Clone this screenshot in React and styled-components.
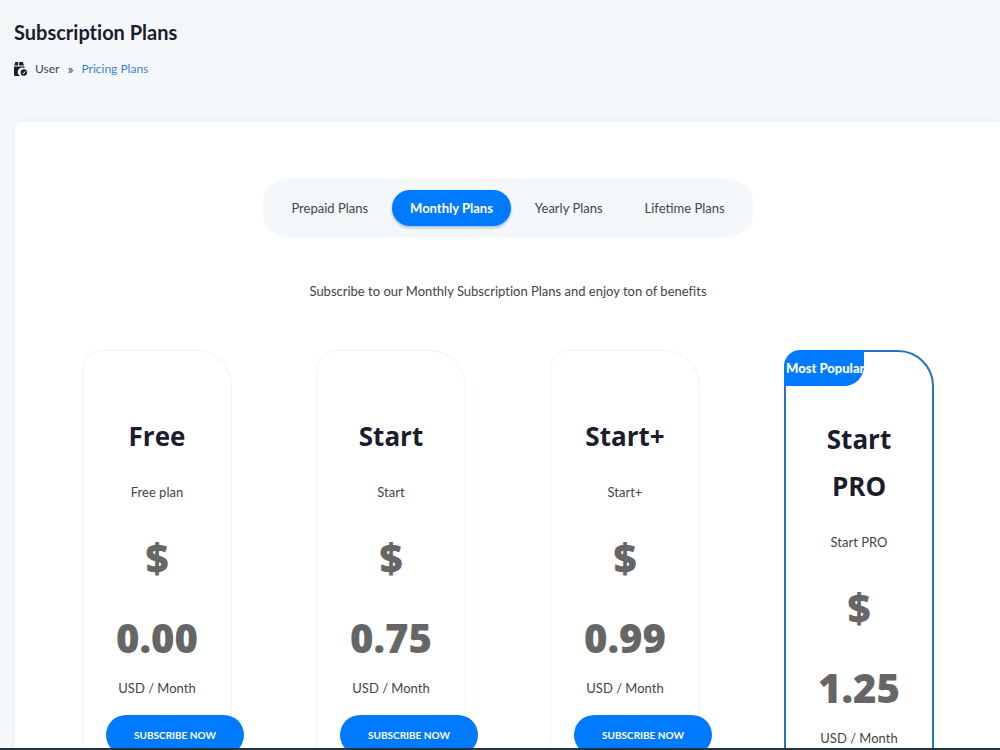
import styled, { createGlobalStyle } from "styled-components";

const GlobalStyle = createGlobalStyle`
  * {
    box-sizing: border-box;
  }

  body {
    margin: 0;
    background-color: #f4f8fb;
    color: #444;
    font-family: Lato, "Open Sans", sans-serif;
    font-size: 13px;
    font-variant-ligatures: none;
    line-height: 20px;
  }
`;

const tabs = ["Prepaid Plans", "Monthly Plans", "Yearly Plans", "Lifetime Plans"];

const plans = [
  { name: "Free", description: "Free plan", price: "0.00" },
  { name: "Start", description: "Start", price: "0.75" },
  { name: "Start+", description: "Start+", price: "0.99" },
  { name: "Start PRO", description: "Start PRO", price: "1.25", popular: true },
];

const BoxCheckIcon = () => (
  <svg width="13" height="15" viewBox="0 0 13 15" aria-hidden="true">
    <path d="M1.4 0H4.2V3.6H0.2ZM5.2 0H8.8L10 3.6H5.2Z" fill="#1b1c2d" />
    <path d="M0 4.5H10.4V6.2A4.3 4.3 0 0 0 6 14H1.2Q0 14 0 12.8Z" fill="#1b1c2d" />
    <circle cx="9.8" cy="10.5" r="3.2" fill="#1b1c2d" />
    <path d="M8.3 10.6L9.4 11.7L11.4 9.3" fill="none" stroke="#fff" strokeWidth="1" />
  </svg>
);

const App = () => {
  return (
    <Page>
      <GlobalStyle />
      <Header>
        <Title>Subscription Plans</Title>
        <Breadcrumb aria-label="Breadcrumb">
          <BoxCheckIcon />
          <span>User</span>
          <Separator>»</Separator>
          <BreadcrumbLink href="#pricing">Pricing Plans</BreadcrumbLink>
        </Breadcrumb>
      </Header>
      <Panel>
        <Tabs>
          {tabs.map((tab) => (
            <Tab key={tab} $active={tab === "Monthly Plans"}>
              {tab}
            </Tab>
          ))}
        </Tabs>
        <Intro>Subscribe to our Monthly Subscription Plans and enjoy ton of benefits</Intro>
        <Plans>
          {plans.map((plan) => (
            <Plan key={plan.name} $popular={plan.popular}>
              {plan.popular && <Badge>Most Popular</Badge>}
              <PlanName>{plan.name}</PlanName>
              <PlanText>{plan.description}</PlanText>
              <Price>
                $ <span>{plan.price}</span>
              </Price>
              <PlanText>USD / Month</PlanText>
              <SubscribeButton>SUBSCRIBE NOW</SubscribeButton>
            </Plan>
          ))}
        </Plans>
      </Panel>
    </Page>
  );
};

const Page = styled.div`
  height: 100vh;
  overflow: hidden;
  display: flex;
  flex-direction: column;
  border-bottom: 2px solid #26323b;
`;

const Header = styled.header`
  flex: none;
  padding: 18px 14px 42px;
`;

const Title = styled.h1`
  margin: 0 0 12px;
  color: #1b1c2d;
  font-size: 20px;
  line-height: 28px;
  font-weight: 700;
`;

const Breadcrumb = styled.nav`
  display: flex;
  align-items: center;
  gap: 8px;
  height: 22px;
  font-size: 12px;
`;

const Separator = styled.span`
  font-size: 14px;
`;

const BreadcrumbLink = styled.a`
  color: #3d7fd6;
  text-decoration: none;
`;

const Panel = styled.main`
  flex: none;
  margin-left: 15px;
  padding: 57px 24px 40px 25px;
  background-color: #fff;
  border-radius: 8px 0 0 0;
  box-shadow: 0 0 6px rgba(40, 70, 100, 0.06);
`;

const Tabs = styled.div`
  display: flex;
  gap: 6px;
  width: fit-content;
  margin: 0 auto;
  padding: 11px 10px;
  border-radius: 24px;
  background-color: #f4f8fb;
`;

const Tab = styled.button`
  height: 36px;
  padding: 0 18px;
  border: 0;
  border-radius: 18px;
  background-color: ${(props) => (props.$active ? "#007bff" : "transparent")};
  box-shadow: ${(props) => (props.$active ? "0 2px 3px rgba(0, 60, 130, 0.3)" : "none")};
  color: ${(props) => (props.$active ? "#fff" : "#444")};
  font-family: inherit;
  font-size: 13px;
  font-weight: ${(props) => (props.$active ? 700 : 400)};
  cursor: pointer;
`;

const Intro = styled.p`
  margin: 44px 0 49px;
  text-align: center;
`;

const Plans = styled.section`
  display: grid;
  grid-template-columns: repeat(4, minmax(0, 1fr));
  align-items: start;
`;

const Plan = styled.article`
  position: relative;
  margin: 0 42px;
  padding: ${(props) => (props.$popular ? "64px 22px 32px" : "62px 23px 32px")};
  border: ${(props) => (props.$popular ? "2px solid #1f74c4" : "1px solid #f1f2f4")};
  border-radius: 20px 36px 20px 20px;
  text-align: center;
`;

const Badge = styled.span`
  position: absolute;
  top: -2px;
  left: -2px;
  padding: 8px 0 8px 2px;
  border-radius: 16px 0 20px 0;
  background-color: #007bff;
  color: #fff;
  font-size: 13px;
  font-weight: 900;
  white-space: nowrap;
`;

const PlanName = styled.h2`
  margin: 0 0 22px;
  color: #1b1c2d;
  font-family: "Open Sans", sans-serif;
  font-size: 26px;
  line-height: 47px;
  font-weight: 700;
`;

const PlanText = styled.p`
  margin: 0;
`;

const Price = styled.div`
  margin: 16px 0 0;
  color: #666;
  font-family: "Open Sans", sans-serif;
  font-size: 40px;
  line-height: 80px;
  font-weight: 800;

  span {
    display: block;
  }
`;

const SubscribeButton = styled.button`
  width: 138px;
  height: 40px;
  margin-top: 17px;
  border: 0;
  border-radius: 20px;
  background-color: #007bff;
  color: #fff;
  font-family: inherit;
  font-size: 10px;
  font-weight: 700;
  cursor: pointer;
`;

export default App;
